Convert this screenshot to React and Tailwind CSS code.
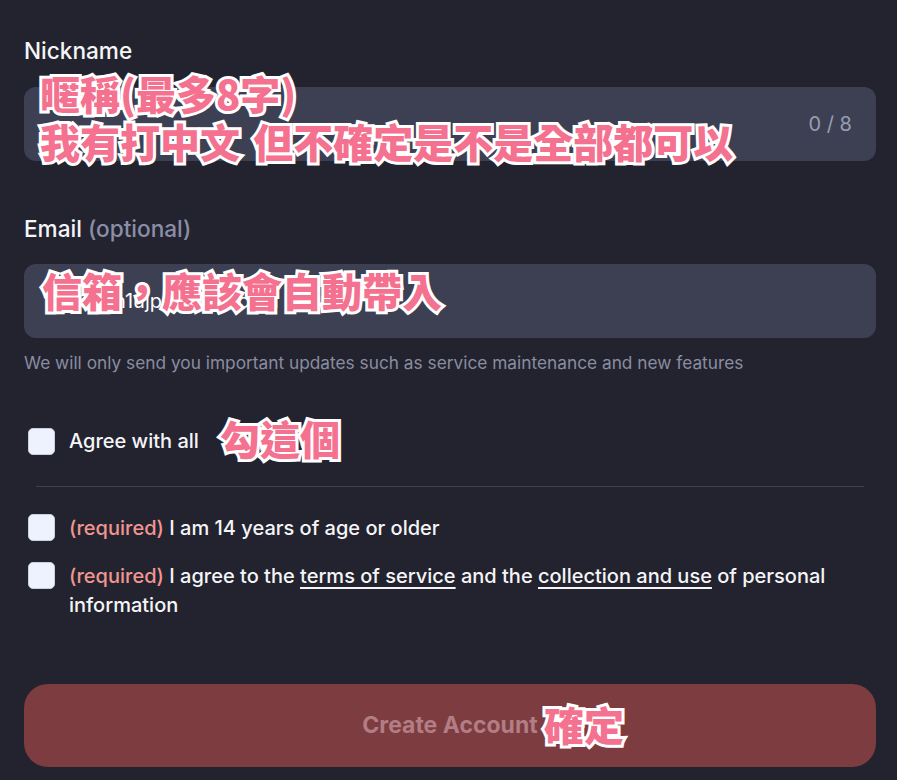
import { useState } from "react";

const note =
  "absolute font-['Noto_Sans_CJK_TC','Noto_Sans_CJK_SC',sans-serif] font-black text-[40px] leading-[48px] text-[#f4718f] [-webkit-text-stroke:6px_#ffffff] [paint-order:stroke_fill] whitespace-nowrap pointer-events-none";

function Check({ checked, onChange }) {
  return (
    <button
      onClick={onChange}
      className="w-[27px] h-[27px] shrink-0 rounded-[5px] bg-[#eef2ff] border border-[#c9cfe0]"
    >
      {checked && <span className="text-[#22232f] text-sm font-bold">✓</span>}
    </button>
  );
}

export default function App() {
  const [nickname, setNickname] = useState("");
  const [all, setAll] = useState(false);
  const [age, setAge] = useState(false);
  const [terms, setTerms] = useState(false);

  return (
    <div className="relative min-h-screen bg-[#22232f] pl-6 pr-[21px] pt-[37px] pb-4 font-['Inter',sans-serif] text-[#f5f5f7]">
      <label className="block text-[22.6px] leading-[28px] font-medium">Nickname</label>
      <div className="mt-[22px] h-[74px] rounded-xl bg-[#3c4052] flex items-center pl-[22px] pr-6">
        <input
          value={nickname}
          onChange={(e) => setNickname(e.target.value.slice(0, 8))}
          className="flex-1 bg-transparent outline-none text-[20px] text-white"
        />
        <span className="text-[20px] text-[#9a9db0]">{nickname.length} / 8</span>
      </div>

      <label className="block mt-[54px] text-[22.6px] leading-[28px] font-medium">
        Email <span className="text-[#8a8ea6]">(optional)</span>
      </label>
      <div className="mt-[21px] h-[74px] rounded-xl bg-[#3c4052] flex items-center pl-[22px] pr-6">
        <input
          defaultValue="mwsadh1ujp@gmail.com"
          className="flex-1 bg-transparent outline-none text-[20px] text-white"
        />
      </div>
      <p className="mt-[13px] text-[17.3px] leading-[24px] text-[#8a8da0]">
        We will only send you important updates such as service maintenance and new features
      </p>

      <div className="mt-[52px] flex items-center gap-[14px] pl-1">
        <Check
          checked={all}
          onChange={() => {
            setAll(!all);
            setAge(!all);
            setTerms(!all);
          }}
        />
        <span className="text-[20px] leading-[28px] font-medium">Agree with all</span>
      </div>

      <div className="mt-[31px] mx-3 h-px bg-[#3d4050]" />

      <div className="mt-[27px] flex items-start gap-[14px] pl-1">
        <Check checked={age} onChange={() => setAge(!age)} />
        <span className="text-[20px] leading-[28px] font-medium">
          <span className="text-[#f0968f]">(required)</span> I am 14 years of age or older
        </span>
      </div>

      <div className="mt-[20px] flex items-start gap-[14px] pl-1">
        <Check checked={terms} onChange={() => setTerms(!terms)} />
        <span className="text-[20px] leading-[29px] font-medium">
          <span className="text-[#f0968f]">(required)</span> I agree to the{" "}
          <span className="underline underline-offset-4">terms of service</span> and the{" "}
          <span className="underline underline-offset-4">collection and use</span> of personal information
        </span>
      </div>

      <button className="mt-[64px] w-full h-[83px] rounded-[24px] bg-[#7d3c3f] text-[23px] font-bold text-[#b27d85]">
        Create Account
      </button>

      {/* annotations */}
      <div className={note + " left-[40px] top-[69px]"}>
        暱稱(最多8字)
        <br />
        我有打中文 <span className="ml-[4px]">但不確定是不是全部都可以</span>
      </div>
      <div className={note + " left-[42px] top-[266px]"}>信箱，應該會自動帶入</div>
      <div className={note + " left-[220px] top-[414px]"}>勾這個</div>
      <div className={note + " left-[544px] top-[700px]"}>確定</div>
    </div>
  );
}
